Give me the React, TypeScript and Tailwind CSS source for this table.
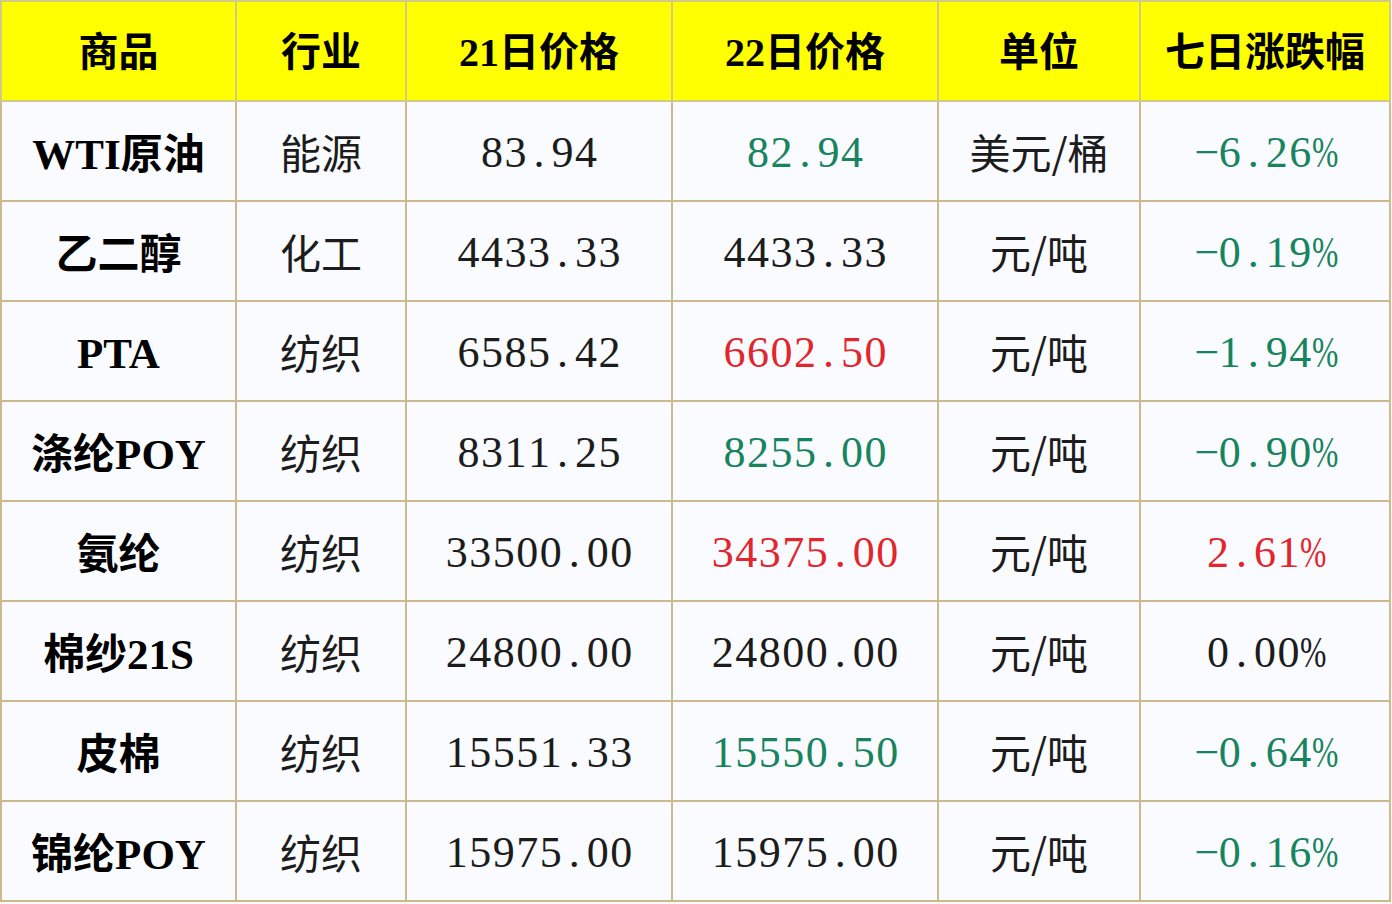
const GREEN = "text-[#17845e]";
const RED = "text-[#e3262d]";
const BLACK = "text-[#1c1c1c]";

type Row = {
  name: string;
  industry: string;
  p21: string;
  p22: string;
  p22c: string;
  unit: string;
  change: string;
  changec: string;
};

const rows: Row[] = [
  { name: "WTI原油", industry: "能源", p21: "83.94", p22: "82.94", p22c: GREEN, unit: "美元/桶", change: "-6.26%", changec: GREEN },
  { name: "乙二醇", industry: "化工", p21: "4433.33", p22: "4433.33", p22c: BLACK, unit: "元/吨", change: "-0.19%", changec: GREEN },
  { name: "PTA", industry: "纺织", p21: "6585.42", p22: "6602.50", p22c: RED, unit: "元/吨", change: "-1.94%", changec: GREEN },
  { name: "涤纶POY", industry: "纺织", p21: "8311.25", p22: "8255.00", p22c: GREEN, unit: "元/吨", change: "-0.90%", changec: GREEN },
  { name: "氨纶", industry: "纺织", p21: "33500.00", p22: "34375.00", p22c: RED, unit: "元/吨", change: "2.61%", changec: RED },
  { name: "棉纱21S", industry: "纺织", p21: "24800.00", p22: "24800.00", p22c: BLACK, unit: "元/吨", change: "0.00%", changec: BLACK },
  { name: "皮棉", industry: "纺织", p21: "15551.33", p22: "15550.50", p22c: GREEN, unit: "元/吨", change: "-0.64%", changec: GREEN },
  { name: "锦纶POY", industry: "纺织", p21: "15975.00", p22: "15975.00", p22c: BLACK, unit: "元/吨", change: "-0.16%", changec: GREEN },
];

const headers = ["商品", "行业", "21日价格", "22日价格", "单位", "七日涨跌幅"];
const widths = [235, 170, 266, 266, 202, 250];

const serif = "font-['Liberation_Serif','Noto_Sans_CJK_SC',serif]";
const cjk = "font-['Noto_Sans_CJK_SC',sans-serif]";

// old-style spreadsheet look: every number char takes the same cell width
function Digits({ text }: { text: string }) {
  return (
    <>
      {Array.from(text).map((ch, i) => (
        <span
          key={i}
          className={`inline-block text-center w-[23.5px] ${ch === "%" ? "scale-x-[0.72] origin-left" : ""}`}
        >
          {ch === "-" ? "−" : ch}
        </span>
      ))}
    </>
  );
}

function Name({ text }: { text: string }) {
  return (
    <>
      {Array.from(text).map((ch, i) =>
        ch.charCodeAt(0) < 128 ? (
          <span key={i}>{ch}</span>
        ) : (
          <span key={i} className={`${cjk} text-[42px]`}>
            {ch}
          </span>
        ),
      )}
    </>
  );
}

const cell = "border-2 border-[#cdb98e] text-center align-middle leading-none whitespace-nowrap";

export default function App() {
  return (
    <div className="w-[1392px] h-[904px] bg-[#f9f9f5]">
      <table className="table-fixed border-collapse w-[1389px] bg-[#fafbfe]">
        <colgroup>
          {widths.map((w, i) => (
            <col key={i} style={{ width: w }} />
          ))}
        </colgroup>
        <thead>
          <tr className="h-[100px] bg-[#ffff00]">
            {headers.map((h) => (
              <th key={h} className={`border-2 border-[#d2c987] text-center align-middle text-[40px] font-bold text-black leading-none pt-1 ${serif}`}>
                {h}
              </th>
            ))}
          </tr>
        </thead>
        <tbody>
          {rows.map((r) => (
            <tr key={r.name} className="h-[100px]">
              <td className={`${cell} text-[43px] font-bold text-black pt-1 ${serif}`}>
                <Name text={r.name} />
              </td>
              <td className={`${cell} text-[41px] text-[#1c1c1c] ${cjk}`}>{r.industry}</td>
              <td className={`${cell} text-[44px] text-[#1c1c1c] pt-1 ${serif}`}>
                <Digits text={r.p21} />
              </td>
              <td className={`${cell} text-[44px] pt-1 ${r.p22c} ${serif}`}>
                <Digits text={r.p22} />
              </td>
              <td className={`${cell} text-[41px] text-[#1c1c1c] ${cjk}`}>{r.unit}</td>
              <td className={`${cell} text-[44px] pt-1 ${r.changec} ${serif}`}>
                <Digits text={r.change} />
              </td>
            </tr>
          ))}
        </tbody>
      </table>
    </div>
  );
}
